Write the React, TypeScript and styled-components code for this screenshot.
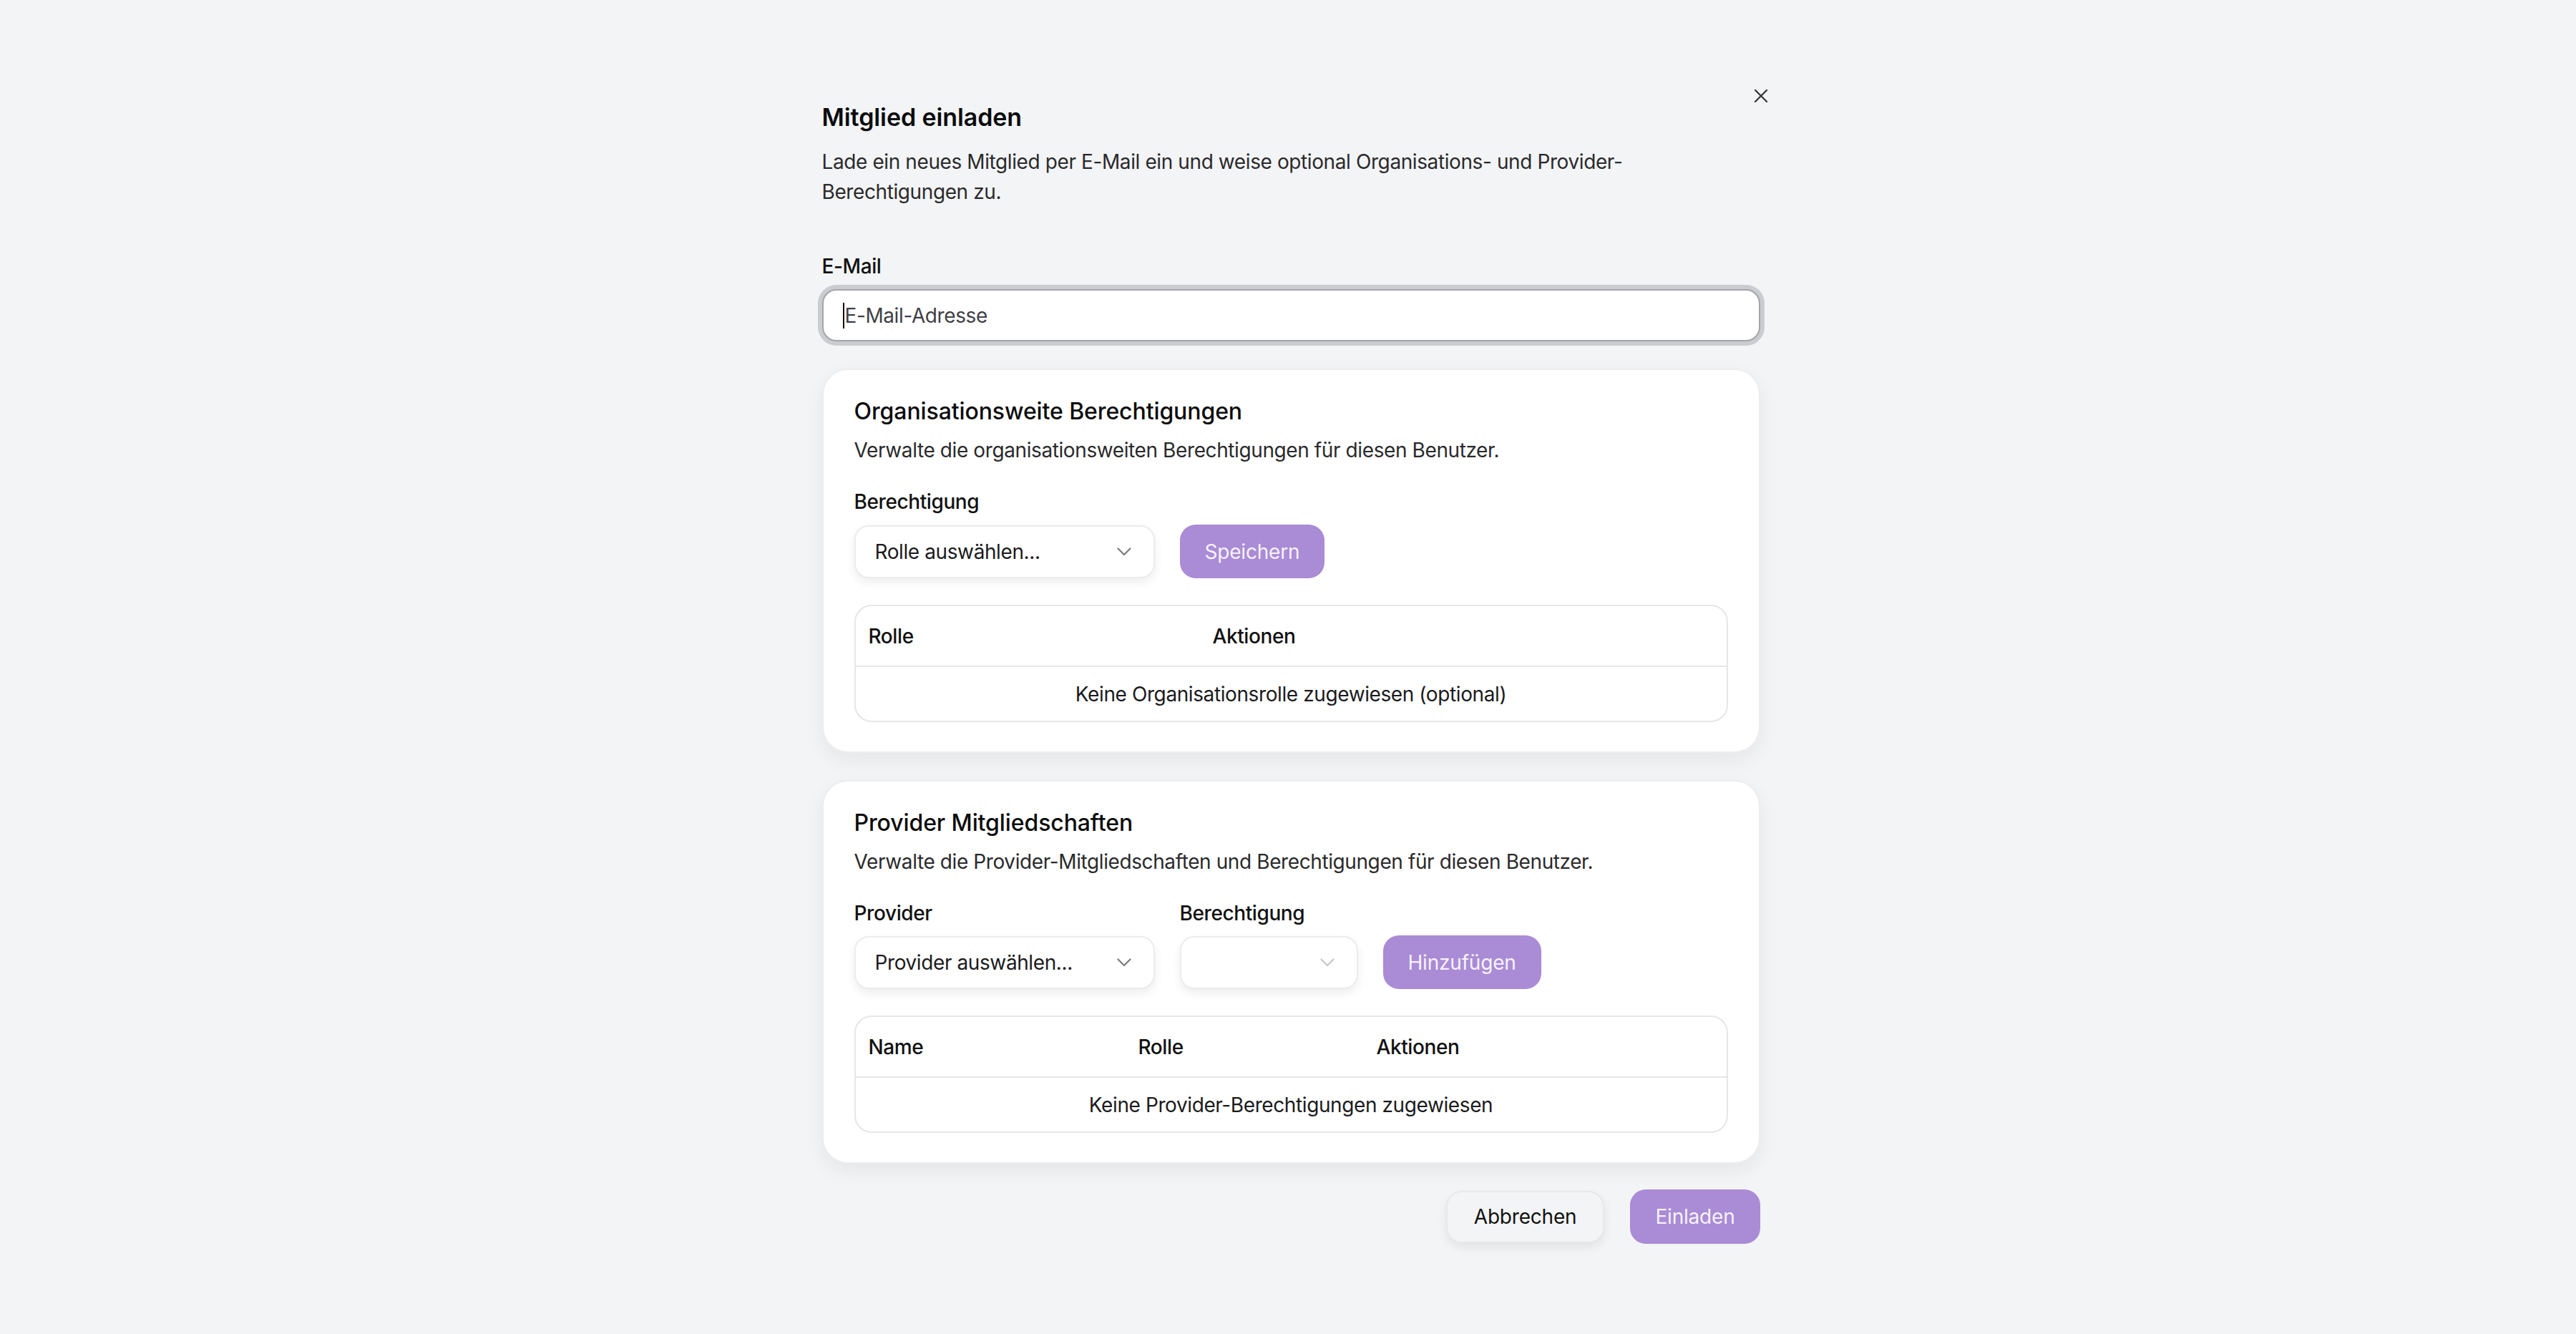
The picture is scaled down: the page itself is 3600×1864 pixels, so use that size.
import React from 'react';
import styled, { createGlobalStyle } from 'styled-components';

const GlobalStyle = createGlobalStyle`
  html, body {
    margin: 0;
    padding: 0;
    background: #f3f4f6;
  }
  body {
    font-family: Inter, "Noto Sans", sans-serif;
    color: #111;
    -webkit-font-smoothing: antialiased;
  }
  * {
    box-sizing: border-box;
  }
`;

interface Column {
    label: string
    width?: number
}

const orgColumns: Column[] = [
    { label: 'Rolle', width: 481 },
    { label: 'Aktionen' },
];

const providerColumns: Column[] = [
    { label: 'Name', width: 377 },
    { label: 'Rolle', width: 333 },
    { label: 'Aktionen' },
];

function Chevron({ muted }: { muted?: boolean }) {
    return (
        <svg width="20" height="12" viewBox="0 0 20 12" fill="none">
            <polyline points="1.5,1.5 10,10 18.5,1.5" stroke={muted ? '#c6c6c8' : '#7b7b7e'} strokeWidth="2.2"
                      strokeLinecap="round" strokeLinejoin="round"/>
        </svg>
    );
}

function DataTable({ columns, empty }: { columns: Column[], empty: string }) {
    return (
        <Table>
            <HeadRow>
                {columns.map(c => (
                    <HeadCell key={c.label} $width={c.width}>{c.label}</HeadCell>
                ))}
            </HeadRow>
            <EmptyRow>{empty}</EmptyRow>
        </Table>
    );
}

function App() {
    return (
        <Page>
            <GlobalStyle/>
            <Dialog>
                <CloseButton aria-label="Schließen">
                    <svg width="20" height="20" viewBox="0 0 20 20" fill="none">
                        <path d="M2 2 L18 18 M18 2 L2 18" stroke="#3a3a3c" strokeWidth="2.4" strokeLinecap="round"/>
                    </svg>
                </CloseButton>

                <Title>Mitglied einladen</Title>
                <Description>
                    Lade ein neues Mitglied per E-Mail ein und weise optional Organisations- und Provider-Berechtigungen zu.
                </Description>

                <Label $top={62}>E-Mail</Label>
                <InputBox>
                    <Caret/>
                    <Placeholder>E-Mail-Adresse</Placeholder>
                </InputBox>

                <Card>
                    <CardTitle>Organisationsweite Berechtigungen</CardTitle>
                    <CardDesc>Verwalte die organisationsweiten Berechtigungen für diesen Benutzer.</CardDesc>
                    <Label $top={30}>Berechtigung</Label>
                    <Controls>
                        <Select $width={420}>
                            <span>Rolle auswählen...</span>
                            <Chevron/>
                        </Select>
                        <PrimaryButton>Speichern</PrimaryButton>
                    </Controls>
                    <DataTable columns={orgColumns} empty="Keine Organisationsrolle zugewiesen (optional)"/>
                </Card>

                <Card>
                    <CardTitle>Provider Mitgliedschaften</CardTitle>
                    <CardDesc>Verwalte die Provider-Mitgliedschaften und Berechtigungen für diesen Benutzer.</CardDesc>
                    <Controls $labelled>
                        <Field>
                            <Label $top={0}>Provider</Label>
                            <Select $width={420}>
                                <span>Provider auswählen...</span>
                                <Chevron/>
                            </Select>
                        </Field>
                        <Field>
                            <Label $top={0}>Berechtigung</Label>
                            <Select $width={249}>
                                <span/>
                                <Chevron muted/>
                            </Select>
                        </Field>
                        <PrimaryButton>Hinzufügen</PrimaryButton>
                    </Controls>
                    <DataTable columns={providerColumns} empty="Keine Provider-Berechtigungen zugewiesen"/>
                </Card>

                <Footer>
                    <SecondaryButton>Abbrechen</SecondaryButton>
                    <PrimaryButton $tall>Einladen</PrimaryButton>
                </Footer>
            </Dialog>
        </Page>
    );
}

const Page = styled.div`
  min-height: 1864px;
  display: flex;
  justify-content: center;
  padding: 100px 0 0 8px;
`;

const Dialog = styled.div`
  position: relative;
  width: 1407px;
  padding: 42px 48px 48px;
  display: flex;
  flex-direction: column;
  font-size: 28px;
  letter-spacing: -0.4px;
`;

const CloseButton = styled.button`
  position: absolute;
  top: 24px;
  right: 37px;
  width: 20px;
  height: 20px;
  padding: 0;
  border: none;
  background: none;
  cursor: pointer;
  display: flex;
`;

const Title = styled.h2`
  margin: 0;
  font-size: 34px;
  line-height: 44px;
  font-weight: 600;
  color: #0c0c0d;
  letter-spacing: -0.1px;
`;

const Description = styled.p`
  margin: 19px 0 0;
  font-size: 28px;
  line-height: 42px;
  color: #2a2a2c;
`;

const Label = styled.label<{ $top: number }>`
  display: block;
  margin-top: ${p => p.$top}px;
  font-size: 28px;
  line-height: 42px;
  font-weight: 500;
  color: #111;
`;

const InputBox = styled.div`
  margin-top: 11px;
  height: 73px;
  background: #fff;
  border: 2px solid #a4a5a8;
  border-radius: 20px;
  box-shadow: 0 0 0 6px #cbccd0;
  padding-left: 27px;
  display: flex;
  align-items: center;
`;

const Caret = styled.span`
  width: 2px;
  height: 36px;
  background: #111;
`;

const Placeholder = styled.span`
  margin-left: 1px;
  font-size: 28px;
  color: #3f3f46;
`;

const Card = styled.section`
  margin-top: 38px;
  background: #fff;
  border: 2px solid #ededee;
  border-radius: 36px;
  padding: 36px 43px 41px;
  box-shadow: 0 10px 28px rgba(0, 0, 0, 0.06);
  display: flex;
  flex-direction: column;
`;

const CardTitle = styled.h3`
  margin: 0;
  font-size: 32px;
  line-height: 44px;
  font-weight: 500;
  color: #0c0c0d;
  letter-spacing: -0.1px;
`;

const CardDesc = styled.p`
  margin: 11px 0 0;
  font-size: 28px;
  line-height: 42px;
  color: #2a2a2c;
`;

const Controls = styled.div<{ $labelled?: boolean }>`
  margin-top: ${p => p.$labelled ? 30 : 11}px;
  display: flex;
  align-items: flex-end;
  gap: 35px;
`;

const Field = styled.div`
  display: flex;
  flex-direction: column;
  gap: 11px;
`;

const Select = styled.div<{ $width: number }>`
  width: ${p => p.$width}px;
  height: 74px;
  background: #fff;
  border: 2px solid #ececed;
  border-radius: 20px;
  box-shadow: 0 6px 14px rgba(0, 0, 0, 0.07);
  padding: 0 31px 0 27px;
  display: flex;
  align-items: center;
  justify-content: space-between;
  font-size: 28px;
  color: #1b1b1d;
  cursor: pointer;
`;

const PrimaryButton = styled.button<{ $tall?: boolean }>`
  height: ${p => p.$tall ? 76 : 75}px;
  padding: 0 35px;
  border: none;
  border-radius: 22px;
  background: #aa8bd5;
  color: #f6f2fb;
  font-family: inherit;
  font-size: 28px;
  font-weight: 400;
  letter-spacing: -0.2px;
  cursor: pointer;
`;

const SecondaryButton = styled.button`
  height: 73px;
  padding: 0 37px;
  border: 2px solid #e8e8ea;
  border-radius: 22px;
  background: #f3f4f6;
  box-shadow: 0 6px 14px rgba(0, 0, 0, 0.07);
  color: #111;
  font-family: inherit;
  font-size: 28px;
  font-weight: 400;
  letter-spacing: -0.2px;
  cursor: pointer;
`;

const Table = styled.div`
  margin-top: 37px;
  border: 2px solid #e6e6e8;
  border-radius: 24px;
  overflow: hidden;
`;

const HeadRow = styled.div`
  height: 85px;
  display: flex;
  align-items: center;
  border-bottom: 2px solid #e6e6e8;
`;

const HeadCell = styled.div<{ $width?: number }>`
  flex: ${p => p.$width ? `0 0 ${p.$width}px` : '1'};
  padding: 0 18px;
  font-size: 28px;
  font-weight: 500;
  color: #111;
`;

const EmptyRow = styled.div`
  height: 75px;
  display: flex;
  align-items: center;
  justify-content: center;
  font-size: 28px;
  color: #1b1b1d;
`;

const Footer = styled.div`
  margin-top: 36px;
  display: flex;
  justify-content: flex-end;
  align-items: center;
  gap: 36px;
`;

export default App;
